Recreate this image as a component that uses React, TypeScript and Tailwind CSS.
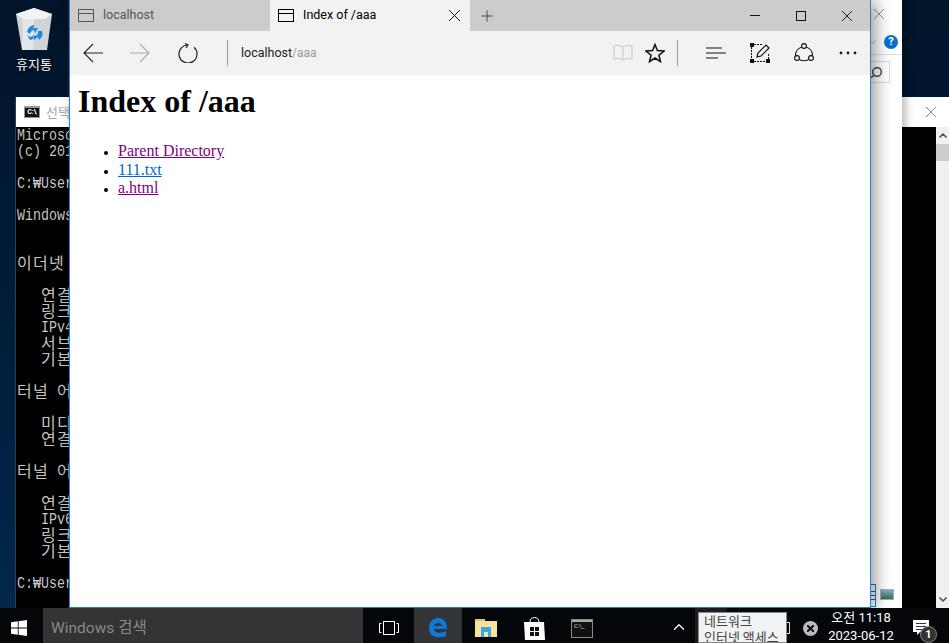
import React from 'react';
import { Plus, ChevronUp, ChevronDown, Search } from 'lucide-react';

const consoleLines = [
  'Microsoft',
  '(c) 2016',
  '',
  'C:₩Users',
  '',
  'Windows',
  '',
  '',
  '이더넷',
  '',
  '   연결',
  '   링크',
  '   IPv4',
  '   서브',
  '   기본',
  '',
  '터널 어',
  '',
  '   미디',
  '   연결',
  '',
  '터널 어',
  '',
  '   연결',
  '   IPv6',
  '   링크',
  '   기본',
  '',
  'C:₩Users',
];

function ConsoleLine({ text }: { text: string }) {
  const parts = text.split(/([가-힣]+)/).filter(Boolean);
  return (
    <div className="h-[16px] leading-[16px] whitespace-pre">
      {parts.map((part, i) =>
        /[가-힣]/.test(part) ? (
          <span key={i} className="text-[16px] tracking-[1.28px] font-['Noto_Sans_CJK_KR',sans-serif]">{part}</span>
        ) : (
          <span key={i} className="inline-block text-[13.33px] scale-y-[1.2] font-['Liberation_Mono',monospace]">{part}</span>
        )
      )}
    </div>
  );
}

function CloseIcon({ size = 10, color = '#111' }: { size?: number; color?: string }) {
  return (
    <svg width={size} height={size} viewBox="0 0 10 10" stroke={color} fill="none" strokeWidth="0.9" className="shrink-0">
      <path d="M0 0 10 10M10 0 0 10" />
    </svg>
  );
}

function TabIcon({ dark }: { dark?: boolean }) {
  return (
    <svg width="16" height="13" viewBox="0 0 16 13" fill="none" stroke={dark ? '#000' : '#555'} className="shrink-0">
      <rect x="0.5" y="0.5" width="15" height="12" />
      <path d="M0.5 4.5h15" />
    </svg>
  );
}

function RecycleBin() {
  return (
    <svg width="38" height="44" viewBox="0 0 38 44">
      <path d="M1 6 L19 0 L37 6 L32 42 L7 42 Z" fill="#cfd4d8" />
      <path d="M1 6 L19 0 L37 6 L30 11 L8 11 Z" fill="#f2f3f4" />
      <path d="M8 11 L19 11 L18 42 L7 42 Z" fill="#e4e7ea" />
      <path d="M12 24a8 8 0 0 1 8-7l-2 3h5l-3 5-1-3a5 5 0 0 0-4 4z" fill="#1e88dc" />
      <path d="M27 23a8 8 0 0 1-3 9l-1-3-4 3-1-5 3 1a5 5 0 0 0 2-5z" fill="#1e88dc" />
      <path d="M12 27l3 5 3-1v-3l-3 1z" fill="#1e88dc" />
    </svg>
  );
}

function TaskbarIcon({ children, active }: { children: React.ReactNode; active?: boolean }) {
  return <div className={`w-12 h-full pt-[5px] flex items-center justify-center ${active ? 'bg-[#333436]' : ''}`}>{children}</div>;
}

export default function App() {
  return (
    <div className="w-[949px] h-[643px] flex flex-col overflow-hidden font-['Roboto','Noto_Sans_CJK_KR',sans-serif]">
      {/* desktop */}
      <div className="relative h-[608px] bg-gradient-to-b from-[#011429] via-[#001c3a] to-[#02284a] overflow-hidden shrink-0">
        <div className="absolute left-[4px] top-[8px] w-[60px] flex flex-col items-center">
          <RecycleBin />
          <span className="text-[13px] leading-[16px] mt-[4px] text-white [text-shadow:0_1px_2px_#000] font-['Noto_Sans_CJK_KR',sans-serif]">휴지통</span>
        </div>

        {/* console window */}
        <div className="absolute left-[15px] top-[97px] w-[934px] h-[511px] flex flex-col border-l border-[#2b3f55]">
          <div className="h-[30px] bg-white flex items-center pl-[8px] pr-[13px] shrink-0">
            <div className="w-[16px] h-[12px] bg-[#111] border border-[#999] border-t-2 text-[7px] leading-[8px] text-white font-bold text-center overflow-hidden">C:\</div>
            <span className="ml-[6px] text-[13px] text-[#aaa] font-['Noto_Sans_CJK_KR',sans-serif]">선택</span>
            <div className="ml-auto"><CloseIcon color="#777" /></div>
          </div>
          <div className="flex-1 flex bg-black min-h-0 overflow-hidden">
            <div className="flex-1 pl-[1px] -mt-[1px] text-[#c4c4c4]">
              {consoleLines.map((line, i) => (
                <ConsoleLine key={i} text={line} />
              ))}
            </div>
            <div className="w-[13px] bg-[#f0f0f0] flex flex-col items-center">
              <ChevronUp className="w-[12px] h-[17px] text-[#555]" strokeWidth={3.5} />
              <div className="w-full h-[17px] bg-[#cdcdcd]" />
              <ChevronDown className="mt-auto w-[12px] h-[17px] text-[#555]" strokeWidth={3.5} />
            </div>
          </div>
        </div>

        {/* explorer window behind the browser */}
        <div className="absolute left-[860px] top-0 w-[42px] h-[608px] bg-white shadow-[4px_0_8px_rgba(0,0,0,0.25)]">
          <div className="h-[55px] border-b border-[#ddd] relative">
            <div className="absolute left-[14px] top-[9px]"><CloseIcon color="#888" /></div>
            <ChevronDown className="absolute left-[8px] top-[37px] w-[10px] h-[10px] text-[#999]" strokeWidth={1.5} />
            <div className="absolute left-[24px] top-[35px] w-[14px] h-[14px] rounded-full bg-[#0a6fd0] text-white text-[11px] leading-[14px] font-bold text-center">?</div>
          </div>
          <div className="absolute left-0 top-[61px] w-[30px] h-[22px] border border-[#ddd] flex items-center justify-end pr-[6px]">
            <Search className="w-[13px] h-[13px] text-[#555] -scale-x-100" strokeWidth={3} />
          </div>
          <div className="absolute left-[10px] top-[584px] w-[6px] h-[23px] border border-[#1b7fcf] flex flex-col justify-center gap-[3px]">
            <div className="h-px bg-[#555]" />
            <div className="h-px bg-[#555]" />
            <div className="h-px bg-[#555]" />
          </div>
          <div className="absolute left-[20px] top-[589px] w-[14px] h-[11px] border border-[#aaa] bg-gradient-to-b from-[#7fb0d0] to-[#3d6b4a]" />
        </div>

        {/* browser */}
        <div className="absolute left-[69px] top-0 w-[802px] h-[608px] flex flex-col bg-white border-x border-b border-x-[#1b84d8] border-b-[#1b7fcf] shadow-[6px_0_14px_rgba(0,0,0,0.35)]">
          <div className="h-[31px] bg-[#cccccc] flex shrink-0">
            <div className="w-[200px] flex items-center pl-[8px] text-[12.5px] text-[#555]">
              <TabIcon />
              <span className="ml-[9px]">localhost</span>
            </div>
            <div className="w-[200px] bg-[#f2f2f2] flex items-center pl-[8px] pr-[10px] text-[12.5px] text-black">
              <TabIcon dark />
              <span className="ml-[9px]">Index of /aaa</span>
              <div className="ml-auto"><CloseIcon size={11} /></div>
            </div>
            <div className="w-[33px] flex items-center justify-center">
              <Plus className="w-[18px] h-[18px] text-[#222]" strokeWidth={1} />
            </div>
            <div className="ml-auto flex items-center">
              <div className="w-[46px] flex justify-center"><div className="w-[10px] h-px bg-[#111]" /></div>
              <div className="w-[46px] flex justify-center"><div className="w-[10px] h-[10px] border border-[#111]" /></div>
              <div className="w-[46px] flex justify-center"><CloseIcon /></div>
            </div>
          </div>
          <div className="h-[44px] bg-[#f2f2f2] flex items-center shrink-0">
            <div className="w-[46px] flex justify-center">
              <svg width="20" height="20" viewBox="0 0 20 20" fill="none" stroke="#222" strokeWidth="1.1">
                <path d="M20 10H1M10 1 1 10l9 9" />
              </svg>
            </div>
            <div className="w-[48px] flex justify-center">
              <svg width="20" height="20" viewBox="0 0 20 20" fill="none" stroke="#aaa" strokeWidth="1.1">
                <path d="M0 10H19M10 1l9 9-9 9" />
              </svg>
            </div>
            <div className="w-[48px] flex justify-center">
              <svg width="20" height="20" viewBox="0 0 20 20" fill="none" stroke="#222" strokeWidth="1.2">
                <path d="M10 2A9 9 0 1 0 16 4.3M7 0.5 10 2 8 5" />
              </svg>
            </div>
            <div className="w-px h-[26px] bg-[#999] ml-[15px]" />
            <div className="ml-[13px] text-[12.5px] text-[#222]">localhost<span className="text-[#999] text-[12px]">/aaa</span></div>
            <div className="ml-auto flex items-center mr-[13px]">
              <svg width="20" height="18" viewBox="0 0 20 18" fill="none" stroke="#cfcfcf" strokeWidth="1.3">
                <path d="M10 3C7 1 4 1 1 2v13c3-1 6-1 9 1 3-2 6-2 9-1V2c-3-1-6-1-9 1zM10 3v13" />
              </svg>
              <svg className="ml-[12px]" width="20" height="20" viewBox="0 0 20 20" fill="none" stroke="#111" strokeWidth="1.5">
                <path d="M10 1.5 12.4 7.6 19 8 13.9 12.2 15.5 18.6 10 15 4.5 18.6 6.1 12.2 1 8 7.6 7.6Z" />
              </svg>
              <div className="w-px h-[26px] bg-[#999] ml-[12px]" />
              <svg className="ml-[28px]" width="20" height="12" viewBox="0 0 20 12" stroke="#111" strokeWidth="1.2">
                <path d="M0 1h16M0 6h20M0 11h12" />
              </svg>
              <svg className="ml-[24px]" width="20" height="20" viewBox="0 0 20 20" fill="none" stroke="#111">
                <path d="M4 1.5h8M1.5 4v13M18.5 11v5M4 18.5h13" strokeDasharray="2 1" />
                <rect x="0" y="0" width="4" height="4" fill="#111" stroke="none" />
                <rect x="0" y="16" width="4" height="4" fill="#111" stroke="none" />
                <rect x="16" y="16" width="4" height="4" fill="#111" stroke="none" />
                <path d="M7 14l1-4 8-8 3 3-8 8z" strokeWidth="1.2" />
              </svg>
              <svg className="ml-[24px]" width="20" height="20" viewBox="0 0 20 20" fill="none" stroke="#111" strokeWidth="1.1">
                <circle cx="10" cy="3" r="2.4" />
                <circle cx="3" cy="15" r="2.4" />
                <circle cx="17" cy="15" r="2.4" />
                <path d="M7.8 4A9 9 0 0 0 1.5 13M12.2 4A9 9 0 0 1 18.5 13M5.3 16.5a10 10 0 0 0 9.4 0" />
              </svg>
              <svg className="ml-[25px]" width="18" height="4" viewBox="0 0 18 4" fill="#222">
                <circle cx="2" cy="2" r="1.4" />
                <circle cx="9" cy="2" r="1.4" />
                <circle cx="16" cy="2" r="1.4" />
              </svg>
            </div>
          </div>
          {/* page */}
          <div className="flex-1 bg-white text-black font-['Liberation_Serif',serif] pl-[8px]">
            <h1 className="text-[32px] leading-[37px] font-bold mt-[8px]">Index of /aaa</h1>
            <ul className="list-disc marker:text-[12px] pl-[40px] mt-[22px] text-[16px] leading-[18.5px]">
              <li><a href="#" className="underline text-[#800080]">Parent Directory</a></li>
              <li><a href="#" className="underline text-[#0068c8]">111.txt</a></li>
              <li><a href="#" className="underline text-[#800080]">a.html</a></li>
            </ul>
          </div>
        </div>
      </div>

      {/* taskbar */}
      <div className="relative h-[35px] bg-[#05060a] flex items-center text-white shrink-0">
        <div className="w-[43px] h-full pt-[4px] pr-[5px] flex items-center justify-center">
          <svg width="16" height="16" viewBox="0 0 16 16" fill="#fff">
            <path d="M0 2.3 6.8 1.3V7.6H0zM7.6 1.2 16 0V7.6H7.6zM0 8.4H6.8V14.7L0 13.7zM7.6 8.4H16V16L7.6 14.8z" />
          </svg>
        </div>
        <div className="w-[320px] h-full bg-[#333333] flex items-center pl-[8px] pt-[6px] text-[15.5px] text-[#8a8a8a]">
          Windows 검색
        </div>
        <div className="w-[51px] h-full pt-[4px] flex items-center justify-center">
          <svg width="20" height="14" viewBox="0 0 20 14" fill="none" stroke="#fff">
            <rect x="4.5" y="0.5" width="11" height="13" />
            <path d="M2.5 2.5H0.5V11.5H2.5M17.5 2.5H19.5V11.5H17.5" />
          </svg>
        </div>
        <TaskbarIcon active>
          <svg width="20" height="20" viewBox="0 0 20 20">
            <path d="M1 10C1 4 5 0 10 0c6 0 9 4 9 11H6c0 4 6 5 12 2v5c-8 3-17 1-17-8zM6 8h8c0-4-7-4-8 0z" fill="#0d78d8" />
          </svg>
        </TaskbarIcon>
        <TaskbarIcon>
          <svg width="22" height="18" viewBox="0 0 22 18">
            <path d="M0 0h8l2 2h12v16H0z" fill="#fbe29a" />
            <rect x="0" y="0" width="10" height="2" fill="#e8c060" />
            <path d="M6 8h10v10h-3v-5H9v5H6z" fill="#3ba7e6" />
          </svg>
        </TaskbarIcon>
        <TaskbarIcon>
          <svg width="21" height="24" viewBox="0 0 21 24">
            <path d="M6 6C6 0 15 0 15 6" fill="none" stroke="#fff" />
            <path d="M0 6h20l1 18H1z" fill="#fff" />
            <path d="M6 11h4v4H6zM11 11h4v4h-4zM6 16h4v4H6zM11 16h4v4h-4z" fill="#111" />
          </svg>
        </TaskbarIcon>
        <TaskbarIcon>
          <div className="w-[22px] h-[19px] border border-[#888] bg-[#111] flex flex-col">
            <div className="h-[2px] bg-[#aaa]" />
            <div className="text-[6px] leading-[8px] pl-[2px] text-[#ddd]">C:\_</div>
          </div>
        </TaskbarIcon>
        <ChevronUp className="absolute left-[670px] top-[10px] w-[18px] h-[18px]" strokeWidth={1.6} />
        <div className="absolute left-[695px] top-0 w-[32px] h-full bg-[#1c1c1c]" />
        <div className="absolute left-[767px] top-[14px] w-[23px] h-[12px] border border-[#ddd]" />
        <div className="absolute left-[803px] top-[13px] w-[15px] h-[15px] rounded-full bg-[#bbb] flex items-center justify-center">
          <svg width="7" height="7" viewBox="0 0 7 7" stroke="#111" strokeWidth="2"><path d="M0 0 7 7M7 0 0 7" /></svg>
        </div>
        <div className="absolute left-[821px] top-0 w-[80px] h-full pt-[3px] flex flex-col items-center justify-center text-[13px] leading-[18px] text-white">
          <span>오전 11:18</span>
          <span>2023-06-12</span>
        </div>
        <svg className="absolute left-[913px] top-[12px]" width="16" height="16" viewBox="0 0 16 16">
          <path d="M0 0h16v12H7l-3 3v-3H0z" fill="#fff" />
          <path d="M3 3.5h10M3 6.5h10M3 9.5h6" stroke="#333" />
        </svg>
        <div className="absolute left-[920px] top-[18px] w-[17px] h-[17px] rounded-full bg-[#333] border border-[#888] text-[11px] leading-[15px] font-bold text-center">1</div>
        {/* tooltip */}
        <div className="absolute left-[698px] top-[4px] w-[89px] h-[31px] bg-[#f1f2f3] border border-[#888] pl-[5px] text-[13px] leading-[16px] text-[#444] font-['Noto_Sans_CJK_KR',sans-serif] overflow-hidden">
          <div>네트워크</div>
          <div>인터넷 액세스</div>
        </div>
      </div>
    </div>
  );
}
